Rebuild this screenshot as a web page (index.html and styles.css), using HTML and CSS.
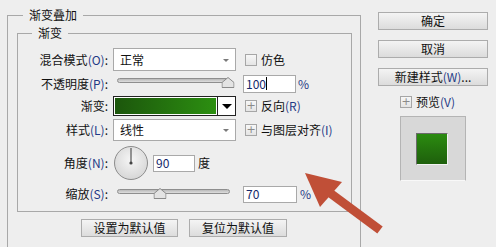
FILE: index.html
```html
<!DOCTYPE html>
<html>
<head>
<meta charset="UTF-8">
<link rel="stylesheet" href="styles.css">
</head>
<body>
<div class="dialog">

<fieldset class="group outer">
<legend>渐变叠加</legend>

<fieldset class="group inner">
<legend>渐变</legend>

<div class="row r1">
	<span class="lbl">混合模式<span class="key">(O)</span>:</span>
	<div class="select"><span>正常</span><i class="caret"></i></div>
	<span class="box check"></span><span class="opt">仿色</span>
</div>

<div class="row r2">
	<span class="lbl">不透明度<span class="key">(P)</span>:</span>
	<div class="slider">
		<div class="track"></div>
		<svg class="thumb" style="left: 95%" width="13" height="11" viewBox="0 0 13 11"><path d="M6.5 0.5 L12.5 5.5 L12.5 10.5 L0.5 10.5 L0.5 5.5 Z" fill="#e3e3e3" stroke="#8a8a8a"/></svg>
	</div>
	<div class="field w53"><span class="val">100</span><span class="cursor"></span></div>
	<span class="unit">%</span>
</div>

<div class="row r3">
	<span class="lbl">渐变:</span>
	<div class="gradient"><div class="ramp"></div><div class="drop"><i></i></div></div>
	<span class="box plus">+</span><span class="opt">反向<span class="key">(R)</span></span>
</div>

<div class="row r4">
	<span class="lbl">样式<span class="key">(L)</span>:</span>
	<div class="select"><span>线性</span><i class="caret"></i></div>
	<span class="box plus">+</span><span class="opt">与图层对齐<span class="key">(I)</span></span>
</div>

<div class="row r5">
	<span class="lbl">角度<span class="key">(N)</span>:</span>
	<svg class="dial" width="36" height="36" viewBox="0 0 36 36">
		<defs><radialGradient id="dg" cx="50%" cy="40%" r="60%"><stop offset="0" stop-color="#f6f6f6"/><stop offset="1" stop-color="#d6d6d6"/></radialGradient></defs>
		<circle cx="18" cy="18" r="16.5" fill="url(#dg)" stroke="#8c8c8c"/>
		<line x1="18" y1="3" x2="18" y2="18" stroke="#555" stroke-width="1.2"/>
		<circle cx="18" cy="18" r="1.6" fill="#444"/>
	</svg>
	<div class="field w42"><span class="val">90</span></div>
	<span class="unit deg">度</span>
</div>

<div class="row r6">
	<span class="lbl">缩放<span class="key">(S)</span>:</span>
	<div class="slider">
		<div class="track"></div>
		<svg class="thumb" style="left: 40%" width="13" height="11" viewBox="0 0 13 11"><path d="M6.5 0.5 L12.5 5.5 L12.5 10.5 L0.5 10.5 L0.5 5.5 Z" fill="#e3e3e3" stroke="#8a8a8a"/></svg>
	</div>
	<div class="field w54"><span class="val">70</span></div>
	<span class="unit pct">%</span>
</div>

</fieldset>

<div class="defaults">
	<div class="btn b97">设置为默认值</div>
	<div class="btn b98">复位为默认值</div>
</div>

</fieldset>

<div class="side">
	<div class="btn">确定</div>
	<div class="btn">取消</div>
	<div class="btn">新建样式<span class="key">(W)</span>...</div>
	<div class="preview-opt"><span class="box plus">+</span><span class="opt">预览<span class="key">(V)</span></span></div>
	<div class="preview"><div class="swatch"></div></div>
</div>

</div>

<svg class="arrow" width="496" height="247" viewBox="0 0 496 247">
	<line x1="326" y1="190" x2="380" y2="230" stroke="#c04f37" stroke-width="9"/>
	<polygon points="305,173 342,182 320,207" fill="#c04f37"/>
</svg>
</body>
</html>
```

FILE: styles.css
```css
body {
    margin: 0;
    background: #eeeeee;
    font-family: "Noto Sans CJK SC", "Microsoft YaHei", sans-serif;
    font-size: 12px;
    line-height: 16px;
    color: #111;
    width: 496px;
    height: 247px;
    overflow: hidden;
}
.dialog {
    display: flex;
    align-items: flex-start;
}
.key {
    color: #1f3a86;
}

/* group boxes */
.group {
    box-sizing: border-box;
    margin: 0;
    padding: 0;
    border: 1px solid #a8a8a8;
    min-inline-size: 0;
}
.group legend {
    padding: 0 6px;
    line-height: 16px;
}
.outer {
    margin: 7px 0 0 7px;
    width: 354px;
    padding-bottom: 12px;
}
.outer > legend {
    margin-left: 15px;
}
.inner {
    margin: 2px 0 0 9px;
    width: 335px;
    padding: 7px 0 8px 0;
}
.inner > legend {
    margin-left: 14px;
}

/* rows */
.row {
    display: flex;
    align-items: center;
}
.r1 { height: 23px; }
.r2 { height: 19px; margin-top: 3px; }
.r3 { height: 20px; margin-top: 3px; }
.r4 { height: 22px; margin-top: 3px; }
.r5 { height: 36px; margin-top: 4px; }
.r6 { height: 18px; margin-top: 4px; }
.lbl {
    width: 90px;
    margin-right: 5px;
    text-align: right;
    white-space: nowrap;
}
.opt {
    margin-left: 4px;
    white-space: nowrap;
}

.select {
    box-sizing: border-box;
    width: 123px;
    height: 100%;
    background: #fff;
    border: 1px solid #a9a9a9;
    display: flex;
    align-items: center;
    justify-content: space-between;
    padding: 0 6px 0 6px;
}
.caret {
    width: 0;
    height: 0;
    border-left: 3px solid transparent;
    border-right: 3px solid transparent;
    border-top: 3px solid #7a7a7a;
    margin-top: 1px;
}

.box {
    box-sizing: border-box;
    width: 12px;
    height: 12px;
    margin-left: 9px;
    border: 1px solid #a6a6a6;
    background: linear-gradient(#f7f7f7, #e4e4e4);
    color: #8a8a8a;
    font-size: 11px;
    line-height: 9px;
    text-align: center;
    font-family: "DejaVu Sans", sans-serif;
}

/* sliders */
.slider {
    position: relative;
    width: 123px;
    height: 100%;
}
.track {
    box-sizing: border-box;
    margin: 4px 6px 0 4px;
    height: 5px;
    border: 1px solid #8e8e8e;
    border-radius: 3px;
    background: linear-gradient(#b9b9b9, #dedede);
}
.thumb {
    position: absolute;
    top: 3px;
    margin-left: -2px;
    transform: translateX(-50%);
}

.field {
    box-sizing: border-box;
    height: 18px;
    margin-left: 7px;
    background: #fff;
    border: 1px solid #a9a9a9;
    display: flex;
    align-items: center;
    padding-left: 2px;
    color: #14286a;
}
.r5 .field, .r6 .field {
    height: 17px;
}
.w53 { width: 53px; }
.w54 { width: 54px; }
.w42 { width: 42px; margin-left: 4px; }
.cursor {
    width: 1px;
    height: 13px;
    background: #000;
}
.unit {
    margin-left: 2px;
    color: #1f3a86;
}
.pct {
    margin-left: 3px;
}
.deg {
    margin-left: 3px;
    color: #111;
}

/* gradient picker */
.gradient {
    box-sizing: border-box;
    width: 123px;
    height: 100%;
    border: 1px solid #222;
    display: flex;
    background: #fff;
}
.ramp {
    flex: 1;
    margin: 1px;
    background: linear-gradient(to right, #1c560c, #2c8f11);
}
.drop {
    width: 17px;
    border-left: 1px solid #222;
    display: flex;
    align-items: center;
    justify-content: center;
}
.drop i {
    width: 0;
    height: 0;
    border-left: 5px solid transparent;
    border-right: 5px solid transparent;
    border-top: 5px solid #000;
}

/* buttons */
.btn {
    box-sizing: border-box;
    height: 18px;
    border: 1px solid #acacac;
    background: linear-gradient(#f4f4f4, #dcdcdc);
    text-align: center;
    line-height: 16px;
    white-space: nowrap;
}
.defaults {
    display: flex;
    justify-content: center;
    gap: 11px;
    margin-top: 7px;
}
.b97 { width: 97px; }
.b98 { width: 98px; }

.side {
    margin: 12px 0 0 17px;
    width: 110px;
    display: flex;
    flex-direction: column;
    gap: 10px;
}
.preview-opt {
    display: flex;
    align-items: center;
    height: 12px;
    margin-left: 13px;
}
.preview {
    box-sizing: border-box;
    width: 66px;
    height: 65px;
    margin: -2px 0 0 22px;
    background: #d8d8d8;
    border: 1px solid #b4b4b4;
    border-bottom-color: #f8f8f8;
    padding: 16px 0 0 15px;
}
.swatch {
    box-sizing: border-box;
    width: 32px;
    height: 32px;
    border: 1px solid #6a6a6a;
    border-right-color: #f2f2f2;
    border-bottom-color: #f2f2f2;
    background: linear-gradient(#2b8b10, #1e5f0c);
}

.arrow {
    position: absolute;
    left: 0;
    top: 0;
    pointer-events: none;
}
```
